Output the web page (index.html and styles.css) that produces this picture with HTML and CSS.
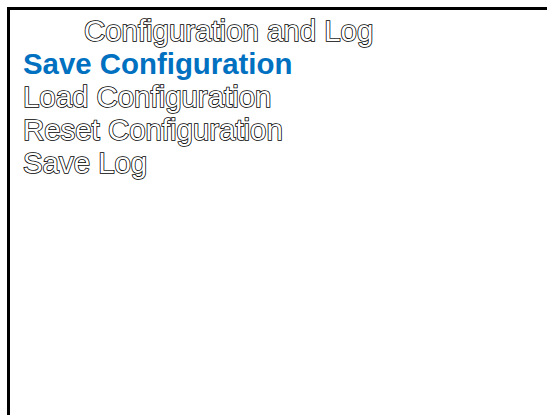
FILE: index.html
```html
<!DOCTYPE html>
<html lang="en">
<head>
  <meta charset="utf-8">
  <title>Configuration and Log</title>
  <link rel="stylesheet" href="styles.css">
</head>
<body>
  <div class="panel">
    <h2 class="heading">Configuration and Log</h2>
    <ul class="menu">
      <li class="active">Save Configuration</li>
      <li>Load Configuration</li>
      <li>Reset Configuration</li>
      <li>Save Log</li>
    </ul>
  </div>
</body>
</html>
```

FILE: styles.css
```css
html,
body {
  margin: 0;
  height: 100%;
  background-color: #fff;
  overflow: hidden;
}

body {
  padding: 7px 0 0 7px;
  font-family: "Liberation Sans", Arial, sans-serif;
  font-size: 29.4px;
  line-height: 33px;
}

.panel {
  border-left: 3px solid #000;
  border-top: 3px solid #000;
  height: 100%;
  padding: 4px 0 0 13px;
}

.heading,
.menu li {
  color: #fff;
  -webkit-text-stroke: 1.6px #000;
  paint-order: stroke fill;
}

.heading {
  margin: 0;
  padding-left: 61px;
  font-size: 29.4px;
  font-weight: normal;
}

.menu {
  list-style: none;
  margin: 0;
  padding: 0;
}

.menu li.active {
  color: #0070c0;
  font-weight: bold;
  -webkit-text-stroke: 0;
}
```
